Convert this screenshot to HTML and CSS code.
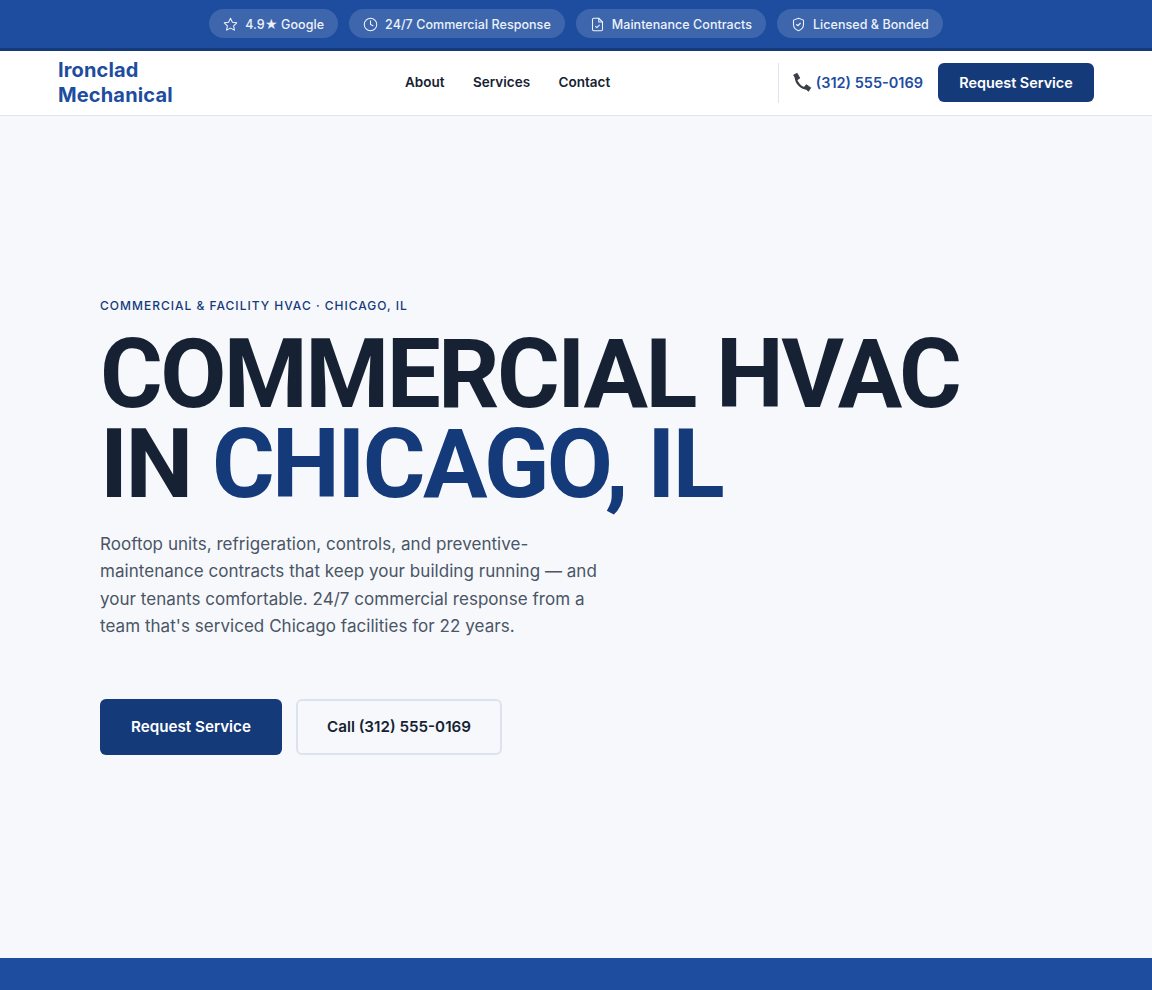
FILE: index.html
```html
<!DOCTYPE html>
<html lang="en">

<head>
    <meta charset="UTF-8">
    <meta name="viewport" content="width=device-width, initial-scale=1.0">
    <title>Ironclad Mechanical</title>
    <link rel="stylesheet" href="styles.css">
</head>

<body>
    <!-- trust bar -->
    <div class="topbar">
        <span class="pill">
            <svg class="pill-icon" viewBox="0 0 24 24"><path d="M12 2l3.09 6.26L22 9.27l-5 4.87 1.18 6.88L12 17.77l-6.18 3.25L7 14.14 2 9.27l6.91-1.01L12 2z"/></svg>
            4.9★ Google
        </span>
        <span class="pill">
            <svg class="pill-icon" viewBox="0 0 24 24"><circle cx="12" cy="12" r="10"/><path d="M12 6v6l4 2"/></svg>
            24/7 Commercial Response
        </span>
        <span class="pill">
            <svg class="pill-icon" viewBox="0 0 24 24"><path d="M14 2H6a2 2 0 0 0-2 2v16a2 2 0 0 0 2 2h12a2 2 0 0 0 2-2V8z"/><path d="M14 2v6h6"/><path d="M9 15l2 2 4-4"/></svg>
            Maintenance Contracts
        </span>
        <span class="pill">
            <svg class="pill-icon" viewBox="0 0 24 24"><path d="M12 22s8-3 8-10V5l-8-3-8 3v7c0 7 8 10 8 10z"/><path d="M9 12l2 2 4-4"/></svg>
            Licensed &amp; Bonded
        </span>
    </div>

    <!-- nav -->
    <header class="nav">
        <a href="#" class="logo">Ironclad<br>Mechanical</a>
        <nav class="nav-links">
            <a href="#">About</a>
            <a href="#">Services</a>
            <a href="#">Contact</a>
        </nav>
        <div class="nav-right">
            <a href="#" class="nav-phone">
                <svg class="phone-icon" viewBox="0 0 24 24">
                    <path class="phone-cord" d="M5.500 5.500C5.500 12.500 11.500 19 19 19"/>
                    <path class="phone-end" d="M3 3.500L7 1.500L10 7L6.500 9z"/>
                    <path class="phone-end" d="M15 17.500L17.500 14.500L22.500 18L20 22z"/>
                </svg>
                (312) 555-0169
            </a>
            <a href="#" class="btn btn-primary btn-small">Request Service</a>
        </div>
    </header>

    <!-- hero -->
    <main class="hero">
        <p class="eyebrow">COMMERCIAL &amp; FACILITY HVAC · CHICAGO, IL</p>
        <h1>COMMERCIAL HVAC<br>IN <span class="accent">CHICAGO, IL</span></h1>
        <p class="lead">Rooftop units, refrigeration, controls, and preventive-maintenance contracts that keep your building running — and your tenants comfortable. 24/7 commercial response from a team that's serviced Chicago facilities for 22 years.</p>
        <div class="hero-actions">
            <a href="#" class="btn btn-primary btn-large">Request Service</a>
            <a href="#" class="btn btn-outline btn-large">Call (312) 555-0169</a>
        </div>
    </main>

    <div class="footer-band"></div>
</body>

</html>
```

FILE: styles.css
```css
* {
    box-sizing: border-box;
}

body {
    margin: 0;
    height: 990px;
    overflow: hidden;
    display: flex;
    flex-direction: column;
    background: #f6f8fc;
    font-family: Inter, "Liberation Sans", sans-serif;
    color: #162233;
}

a {
    text-decoration: none;
    color: inherit;
}

/* trust bar */
.topbar {
    height: 51px;
    flex: none;
    display: flex;
    justify-content: center;
    align-items: center;
    gap: 11px;
    padding-bottom: 1px;
    background: #1e4d9f;
    border-bottom: 3px solid #153a7a;
}

.pill {
    display: flex;
    align-items: center;
    gap: 7px;
    height: 29px;
    padding: 1px 14px 0;
    border-radius: 15px;
    background: rgba(255, 255, 255, .14);
    color: #eef2fa;
    font-size: 12.5px;
    font-weight: 500;
    letter-spacing: .05px;
}

.pill-icon {
    width: 15px;
    height: 15px;
    fill: none;
    stroke: #eef2fa;
    stroke-width: 1.7;
    stroke-linecap: round;
    stroke-linejoin: round;
}

/* nav */
.nav {
    height: 65px;
    flex: none;
    display: flex;
    align-items: center;
    padding: 0 58px 1px;
    background: #fff;
    border-bottom: 1px solid #e0e4ec;
}

.logo {
    width: 347px;
    padding-top: 1px;
    font-size: 20px;
    font-weight: 700;
    line-height: 25px;
    letter-spacing: .15px;
    color: #1e4d9f;
}

.nav-links {
    display: flex;
    gap: 28.5px;
    margin-bottom: 2px;
    font-size: 13.5px;
    font-weight: 600;
}

.nav-right {
    margin-left: auto;
    display: flex;
    align-items: center;
    height: 40px;
    padding-left: 12px;
    border-left: 1px solid #e0e4ec;
}

.nav-phone {
    display: flex;
    align-items: center;
    gap: 4px;
    margin-right: 15px;
    font-size: 14.5px;
    font-weight: 600;
    color: #1e4d9f;
}

.phone-icon {
    width: 21px;
    height: 21px;
}

.phone-cord {
    fill: none;
    stroke: #3a3f47;
    stroke-width: 2.6;
}

.phone-end {
    fill: #3a3f47;
    stroke: #3a3f47;
    stroke-width: 1;
    stroke-linejoin: round;
}

.btn {
    display: flex;
    align-items: center;
    justify-content: center;
    border-radius: 6px;
    font-weight: 600;
}

.btn-primary {
    background: #153a7a;
    color: #fff;
}

.btn-small {
    width: 156px;
    height: 39px;
    font-size: 14.4px;
}

.btn-large {
    height: 56px;
    font-size: 15.2px;
}

.btn-large.btn-primary {
    width: 182px;
}

.btn-outline {
    width: 206px;
    border: 2px solid #dde3ee;
    color: #162233;
}

/* hero */
.hero {
    flex: 1;
    padding: 182px 100px 0;
}

.eyebrow {
    margin: 0 0 15px;
    font-size: 12px;
    font-weight: 500;
    line-height: 16px;
    letter-spacing: 1px;
    color: #153a7a;
}

h1 {
    margin: 0;
    font-family: Roboto, Inter, sans-serif;
    font-size: 96px;
    font-weight: 700;
    line-height: 90px;
    letter-spacing: -2.6px;
    white-space: nowrap;
    color: #162233;
}

.accent {
    color: #153a7a;
}

.lead {
    width: 520px;
    margin: 22px 0 0;
    font-size: 17px;
    line-height: 27.4px;
    letter-spacing: .04px;
    color: #4a5565;
}

.hero-actions {
    display: flex;
    gap: 14px;
    margin-top: 58px;
}

.footer-band {
    height: 32px;
    flex: none;
    background: #1e4d9f;
}
```
